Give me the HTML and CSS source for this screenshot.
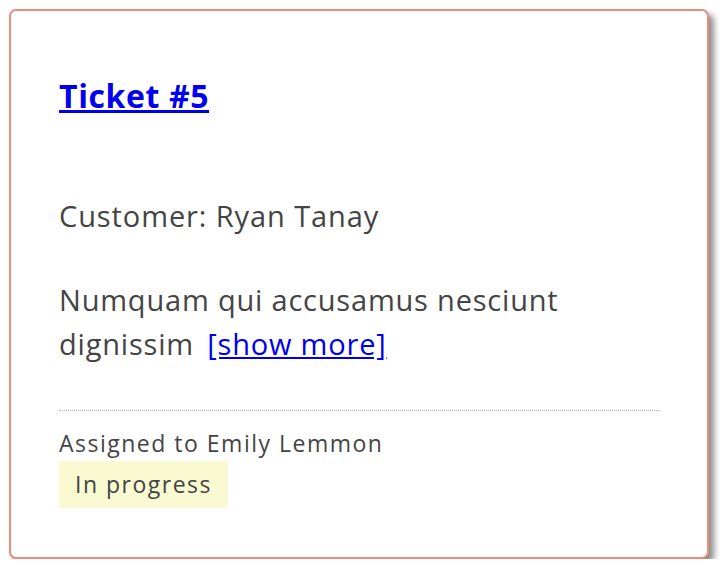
FILE: index.html
```html
<!DOCTYPE html>
<html>
<head>
<meta charset="utf-8">
<link rel="stylesheet" href="styles.css">
</head>
<body>
<div class="card">
  <h2 class="title"><a href="#">Ticket #5</a></h2>
  <p class="customer">Customer: Ryan Tanay</p>
  <p class="desc">Numquam qui accusamus nesciunt dignissim <a class="more" href="#">[show more]</a></p>
  <div class="footer">
    <div class="assigned">Assigned to Emily Lemmon</div>
    <span class="status">In progress</span>
  </div>
</div>
</body>
</html>
```
FILE: styles.css
```css
body {
  margin: 9px;
  background: #fff;
  font-family: "Open Sans", "Noto Sans", sans-serif;
  color: #444;
}
.card {
  width: 600px;
  padding: 48px 48px 49px 48px;
  border: 2px solid #ee8a78;
  border-radius: 7px;
  box-shadow: 5px 5px 6px rgba(0,0,0,0.45);
  background: #fff;
}
a { color: #0000ee; }
.title {
  margin: 17px 0 0 0;
  font-size: 32px;
  line-height: 40px;
  font-weight: 700;
  letter-spacing: 0.6px;
}
.customer {
  margin: 78px 0 0 0;
  font-size: 29px;
  line-height: 44px;
  letter-spacing: 0.9px;
}
.desc {
  margin: 40px 0 0 0;
  font-size: 29px;
  line-height: 44px;
  letter-spacing: 0.8px;
}
.more {
  margin-left: 5px;
}
.footer {
  margin-top: 44px;
  border-top: 1px dotted #aaa;
  padding-top: 15px;
}
.assigned {
  font-size: 23px;
  line-height: 35px;
  letter-spacing: 1.5px;
}
.status {
  display: inline-block;
  vertical-align: top;
  background: #fafad2;
  font-size: 23px;
  line-height: 47px;
  padding: 0 16px;
  letter-spacing: 1.5px;
}
```
